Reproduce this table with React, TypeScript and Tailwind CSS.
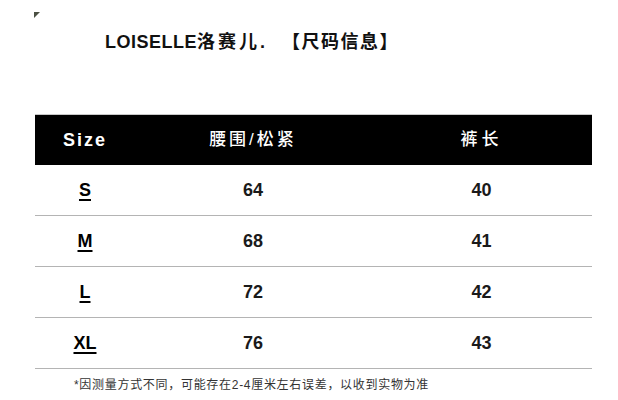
import React from 'react';

// 尺码表数据
interface SizeRow {
    size: string;
    waist: string;
    length: string;
}

const rows: SizeRow[] = [
    { size: 'S', waist: '64', length: '40' },
    { size: 'M', waist: '68', length: '41' },
    { size: 'L', waist: '72', length: '42' },
    { size: 'XL', waist: '76', length: '43' },
];

const FONT = { fontFamily: '"Liberation Sans", "Noto Sans CJK SC", sans-serif' };

export default function App() {
    return (
        <div className="w-[618px] h-[400px] bg-white pt-[12px] overflow-hidden" style={FONT}>
            <div className="ml-[34px] w-0 h-0 border-t-[6px] border-r-[6px] border-t-[#4b5043] border-r-transparent" />

            <h1 className="mt-[12px] pl-[105px] flex items-center text-[18px] leading-[24px] font-bold text-[#111] whitespace-nowrap">
                <span className="tracking-[0.5px]">LOISELLE</span>
                <span className="tracking-[3px]">洛赛儿.</span>
                <span className="ml-[14px] tracking-[1.5px]">【尺码信息】</span>
            </h1>

            <div className="mt-[60px] ml-[35px] w-[557px]">
                <div className="flex h-[51px] items-center bg-black border-t border-[#c8c8c8] text-white">
                    <div className="w-[100px] text-center text-[18px] font-bold tracking-[2px]">Size</div>
                    <div className="w-[236px] text-center text-[17px] font-medium tracking-[3px]">腰围/松紧</div>
                    <div className="flex-1 text-center text-[17px] font-medium tracking-[4px]">裤长</div>
                </div>
                {rows.map((r) => (
                    <div key={r.size} className="flex h-[51px] items-center border-b border-[#b4b4b4] text-[18px] font-bold text-[#1a1a1a]">
                        <div className="w-[100px] text-center">
                            <span className="underline decoration-[1.5px] underline-offset-[3px] text-black">{r.size}</span>
                        </div>
                        <div className="w-[236px] text-center">{r.waist}</div>
                        <div className="flex-1 text-center">{r.length}</div>
                    </div>
                ))}
            </div>

            <p className="mt-[8px] ml-[74px] text-[12px] leading-[16px] tracking-[0.7px] text-[#333] whitespace-nowrap">
                *因测量方式不同，可能存在2-4厘米左右误差，以收到实物为准
            </p>
        </div>
    );
}
